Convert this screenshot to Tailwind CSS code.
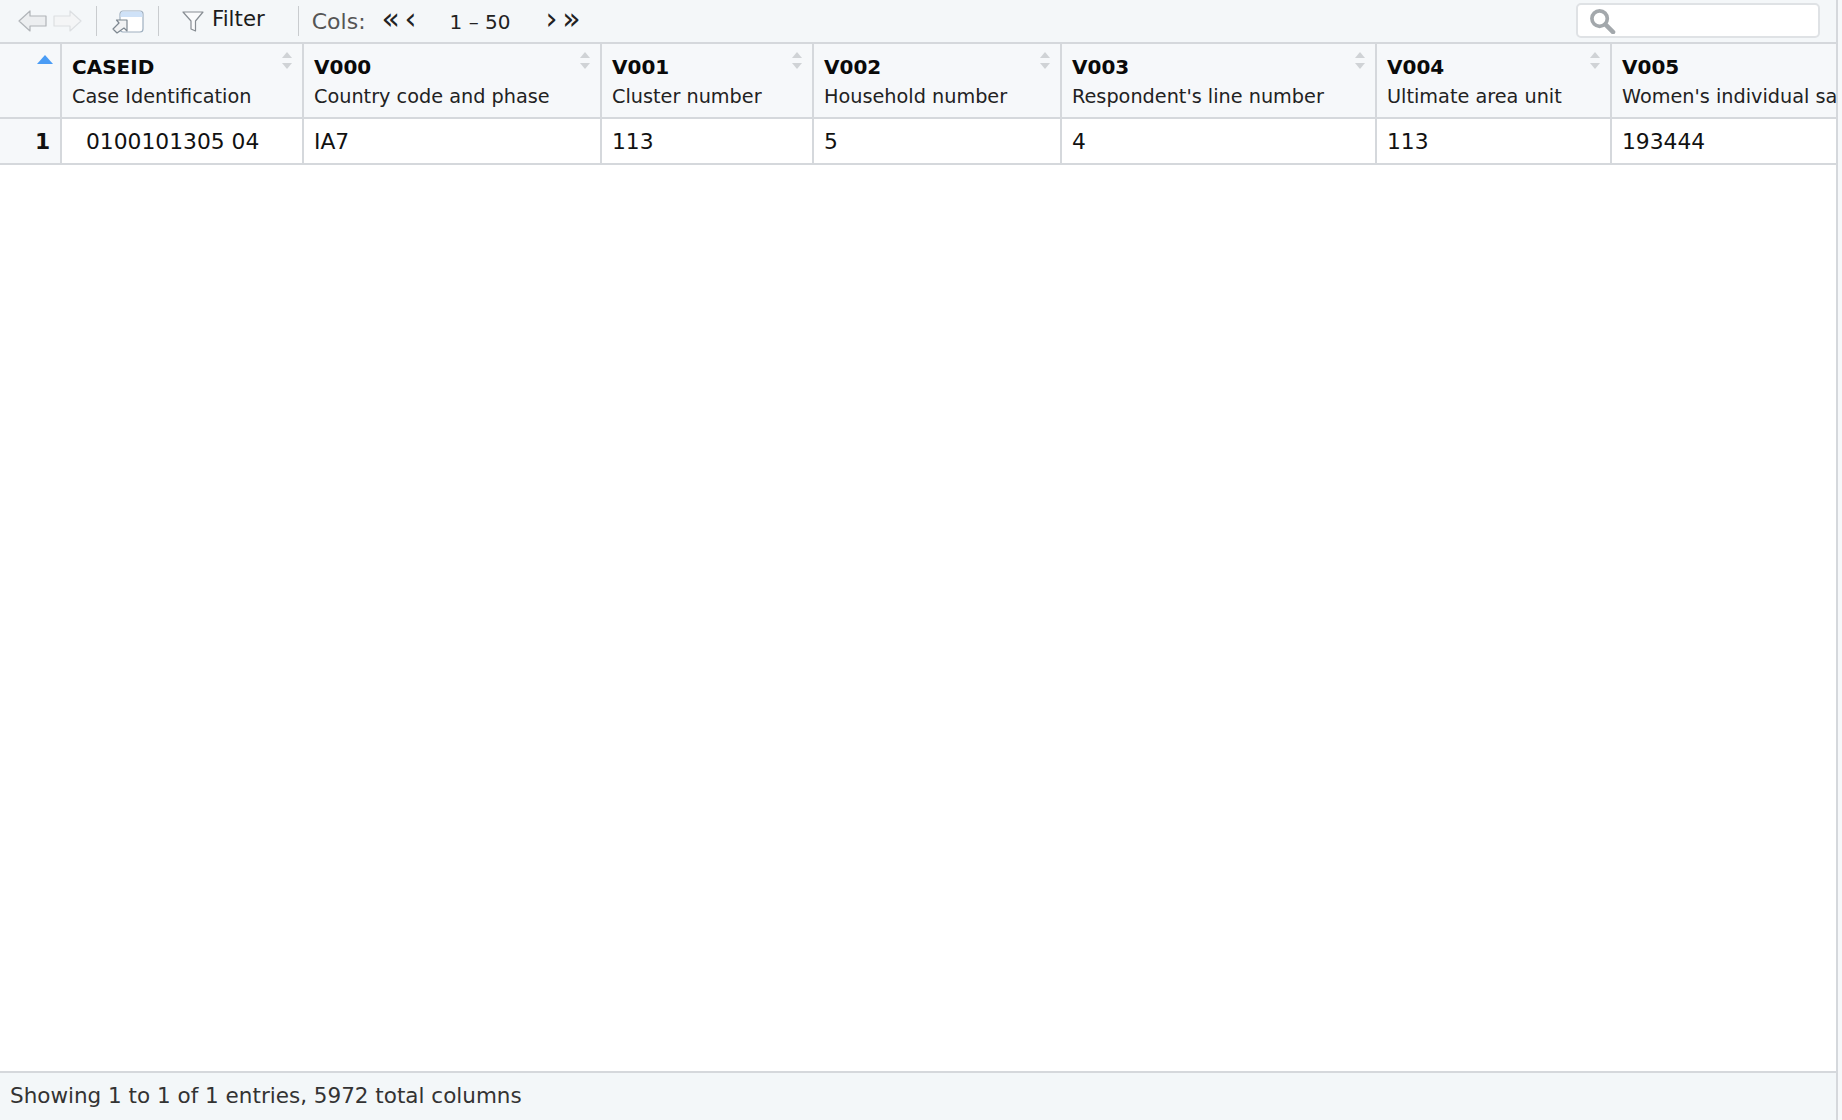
<!DOCTYPE html>
<html>
<head>
<meta charset="utf-8">
<script src="https://cdn.jsdelivr.net/npm/@tailwindcss/browser@4"></script>
</head>
<body class="bg-white overflow-hidden">
<div class="w-[1842px] h-[1120px] flex flex-col font-['DejaVu_Sans',sans-serif] text-[19.25px] text-[#111] bg-[#f6f8fa] overflow-hidden">
  <div class="w-[1838px] h-[1120px] flex flex-col bg-white border-r-[2px] border-[#d5d8dc]">
    <!-- toolbar -->
    <div class="h-[42px] shrink-0 bg-[#f4f7f9] flex items-center relative">
      <svg class="ml-[18px] shrink-0" width="64" height="26" viewBox="0 0 64 26" fill="none">
        <path d="M1 13 L12 3 V8 H28 V18 H12 V23 Z" fill="#eceef0" stroke="#b0b4b8" stroke-width="1.2" stroke-linejoin="round"/>
        <path d="M63 13 L52 3 V8 H36 V18 H52 V23 Z" fill="#f4f5f6" stroke="#dcdfe2" stroke-width="1.2" stroke-linejoin="round"/>
      </svg>
      <div class="ml-[14px] w-[1px] h-[30px] bg-[#c9cccf]"></div>
      <svg class="ml-[15px] shrink-0" width="32" height="26" viewBox="0 0 32 26" fill="none">
        <rect x="8" y="3" width="23" height="21" rx="3" fill="#fff" stroke="#9fb0c0" stroke-width="1.2"/>
        <path d="M8.6 9 V6 a2.4 2.4 0 0 1 2.4 -2.4 H28 a2.4 2.4 0 0 1 2.4 2.4 V9 Z" fill="#cfe2f8"/>
        <path d="M1 21 L7 15 L4.5 12 H15 V23 L12 20 L5 25 Z" fill="#f1f2f3" stroke="#7d8790" stroke-width="1.2" stroke-linejoin="round"/>
      </svg>
      <div class="ml-[14px] w-[1px] h-[30px] bg-[#c9cccf]"></div>
      <svg class="ml-[23px] shrink-0" width="22" height="24" viewBox="0 0 22 24" fill="none">
        <path d="M1 3 H21 L13.5 12 V22 L9 20 V12 Z" fill="#fafbfc" stroke="#878d93" stroke-width="1.2" stroke-linejoin="round"/>
      </svg>
      <span class="ml-[8px] mt-[-5px] text-[#1c1c1c] text-[21.3px]">Filter</span>
      <div class="ml-[33px] w-[1px] h-[30px] bg-[#c9cccf]"></div>
      <span class="ml-[13px] text-[#555] text-[22px]">Cols:</span>
      <span class="ml-[14px] w-[22px] text-center mt-[-4px] text-[#222] text-[30px] leading-none">«</span>
      <span class="ml-[2px] w-[14px] text-center mt-[-4px] text-[#222] text-[30px] leading-none">‹</span>
      <span class="ml-[32px] mt-[1px] text-[#222] text-[20px] whitespace-nowrap">1 – 50</span>
      <span class="ml-[34px] w-[14px] text-center mt-[-4px] text-[#222] text-[30px] leading-none">›</span>
      <span class="ml-[2px] w-[22px] text-center mt-[-4px] text-[#222] text-[30px] leading-none">»</span>
      <div class="absolute left-[1576px] top-[3px] w-[244px] h-[35px] bg-white border-[2px] border-[#dfe2e5] rounded-[5px] flex items-center pl-[11px]">
        <svg width="27" height="26" viewBox="0 0 28 27" fill="none">
          <circle cx="11" cy="11" r="8" stroke="#a3a8ac" stroke-width="3.8"/>
          <path d="M17 17 L25 25" stroke="#a3a8ac" stroke-width="4.6" stroke-linecap="round"/>
        </svg>
      </div>
    </div>
    <!-- header -->
    <div class="h-[77px] shrink-0 flex bg-[#f6f8fa] border-t-[2px] border-b-[2px] border-[#d5d8dc]">
      <div class="w-[62px] shrink-0 border-r-[2px] border-[#d5d8dc] relative">
        <svg class="absolute left-[37px] top-[11px]" width="16" height="9" viewBox="0 0 16 9"><path d="M8 0 L16 9 H0 Z" fill="#4a9cf5"/></svg>
      </div>
      <div class="w-[242px] shrink-0 border-r-[2px] border-[#d5d8dc] pl-[10px] pt-[10px] relative">
        <div class="font-bold text-[20px] leading-[27px] text-[#0a0a0a]">CASEID</div><div class="leading-[32px] text-[#222] whitespace-nowrap">Case Identification</div>
        <svg class="absolute right-[9px] top-[7px]" width="12" height="19" viewBox="0 0 12 19"><path d="M6 1 L11 7 H1 Z" fill="#d0d3d6"/><path d="M6 18 L11 12 H1 Z" fill="#d0d3d6"/></svg>
      </div>
      <div class="w-[298px] shrink-0 border-r-[2px] border-[#d5d8dc] pl-[10px] pt-[10px] relative">
        <div class="font-bold text-[20px] leading-[27px] text-[#0a0a0a]">V000</div><div class="leading-[32px] text-[#222] whitespace-nowrap">Country code and phase</div>
        <svg class="absolute right-[9px] top-[7px]" width="12" height="19" viewBox="0 0 12 19"><path d="M6 1 L11 7 H1 Z" fill="#d0d3d6"/><path d="M6 18 L11 12 H1 Z" fill="#d0d3d6"/></svg>
      </div>
      <div class="w-[212px] shrink-0 border-r-[2px] border-[#d5d8dc] pl-[10px] pt-[10px] relative">
        <div class="font-bold text-[20px] leading-[27px] text-[#0a0a0a]">V001</div><div class="leading-[32px] text-[#222] whitespace-nowrap">Cluster number</div>
        <svg class="absolute right-[9px] top-[7px]" width="12" height="19" viewBox="0 0 12 19"><path d="M6 1 L11 7 H1 Z" fill="#d0d3d6"/><path d="M6 18 L11 12 H1 Z" fill="#d0d3d6"/></svg>
      </div>
      <div class="w-[248px] shrink-0 border-r-[2px] border-[#d5d8dc] pl-[10px] pt-[10px] relative">
        <div class="font-bold text-[20px] leading-[27px] text-[#0a0a0a]">V002</div><div class="leading-[32px] text-[#222] whitespace-nowrap">Household number</div>
        <svg class="absolute right-[9px] top-[7px]" width="12" height="19" viewBox="0 0 12 19"><path d="M6 1 L11 7 H1 Z" fill="#d0d3d6"/><path d="M6 18 L11 12 H1 Z" fill="#d0d3d6"/></svg>
      </div>
      <div class="w-[315px] shrink-0 border-r-[2px] border-[#d5d8dc] pl-[10px] pt-[10px] relative">
        <div class="font-bold text-[20px] leading-[27px] text-[#0a0a0a]">V003</div><div class="leading-[32px] text-[#222] whitespace-nowrap">Respondent's line number</div>
        <svg class="absolute right-[9px] top-[7px]" width="12" height="19" viewBox="0 0 12 19"><path d="M6 1 L11 7 H1 Z" fill="#d0d3d6"/><path d="M6 18 L11 12 H1 Z" fill="#d0d3d6"/></svg>
      </div>
      <div class="w-[235px] shrink-0 border-r-[2px] border-[#d5d8dc] pl-[10px] pt-[10px] relative">
        <div class="font-bold text-[20px] leading-[27px] text-[#0a0a0a]">V004</div><div class="leading-[32px] text-[#222] whitespace-nowrap">Ultimate area unit</div>
        <svg class="absolute right-[9px] top-[7px]" width="12" height="19" viewBox="0 0 12 19"><path d="M6 1 L11 7 H1 Z" fill="#d0d3d6"/><path d="M6 18 L11 12 H1 Z" fill="#d0d3d6"/></svg>
      </div>
      <div class="flex-1 min-w-0 pl-[10px] pt-[10px]">
        <div class="font-bold text-[20px] leading-[27px] text-[#0a0a0a]">V005</div><div class="leading-[32px] text-[#222] whitespace-nowrap">Women's individual sa</div>
      </div>
    </div>
    <!-- row -->
    <div class="h-[46px] shrink-0 flex border-b-[2px] border-[#d5d8dc] text-[#111] text-[21.8px] leading-[45px]">
      <div class="w-[62px] shrink-0 border-r-[2px] border-[#d5d8dc] bg-[#f6f8fa] font-bold pl-[35px]">1</div>
      <div class="w-[242px] shrink-0 border-r-[2px] border-[#d5d8dc] pl-[24px] whitespace-nowrap">0100101305 04</div>
      <div class="w-[298px] shrink-0 border-r-[2px] border-[#d5d8dc] pl-[10px]">IA7</div>
      <div class="w-[212px] shrink-0 border-r-[2px] border-[#d5d8dc] pl-[10px]">113</div>
      <div class="w-[248px] shrink-0 border-r-[2px] border-[#d5d8dc] pl-[10px]">5</div>
      <div class="w-[315px] shrink-0 border-r-[2px] border-[#d5d8dc] pl-[10px]">4</div>
      <div class="w-[235px] shrink-0 border-r-[2px] border-[#d5d8dc] pl-[10px]">113</div>
      <div class="flex-1 pl-[10px]">193444</div>
    </div>
    <div class="flex-1"></div>
    <!-- footer -->
    <div class="h-[49px] shrink-0 bg-[#f3f7f9] border-t-[2px] border-[#d5d8dc] pl-[10px] flex items-center text-[#333] text-[21.5px]">Showing 1 to 1 of 1 entries, 5972 total columns</div>
  </div>
</div>
</body>
</html>
